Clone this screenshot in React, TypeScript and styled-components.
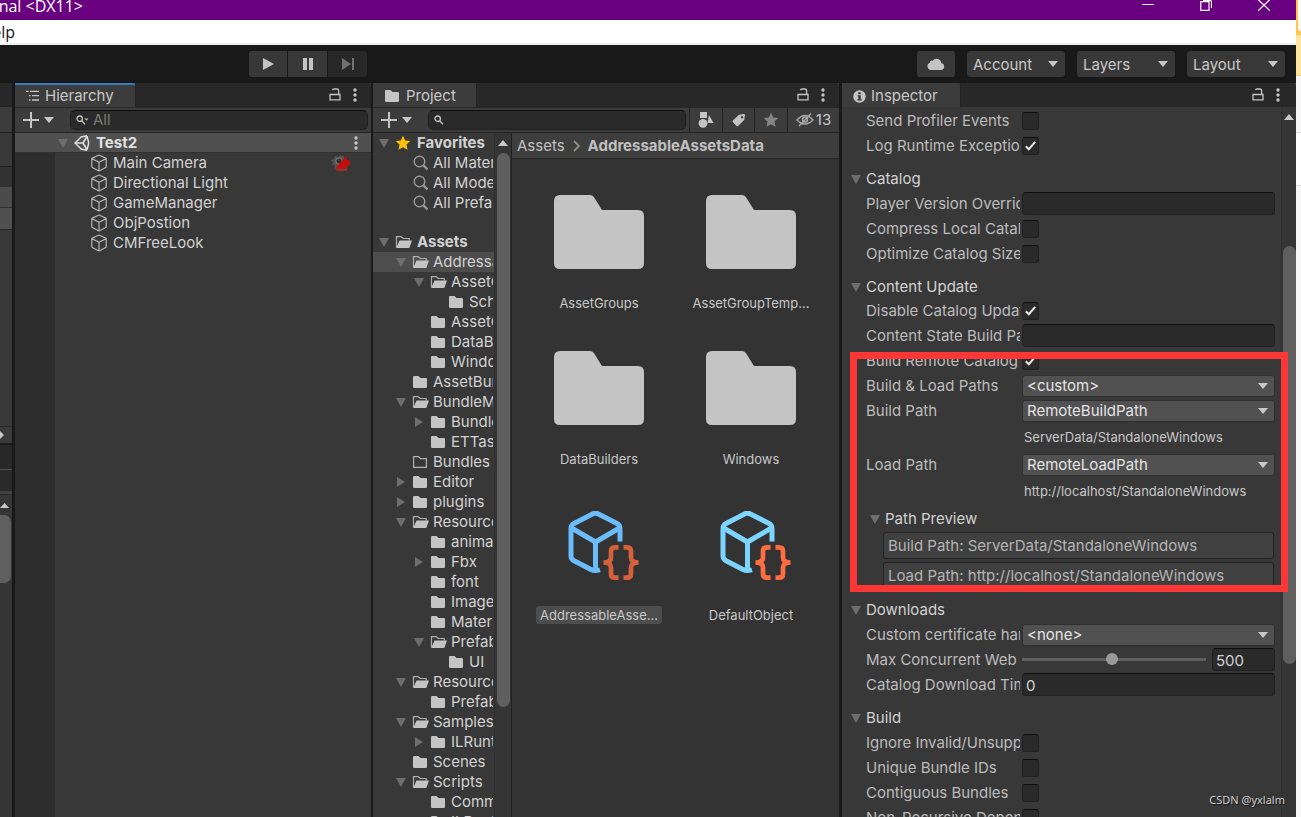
import React, { useId } from "react";
import styled, { createGlobalStyle, css } from "styled-components";

const Global = createGlobalStyle`
  *, *::before, *::after { box-sizing: border-box; }
  html, body, #root { height: 100%; }
  body {
    margin: 0;
    overflow: hidden;
    background: #f6f6f6;
    color: #c8c8c8;
    font: 15px/20px Inter, "Liberation Sans", sans-serif;
  }
  button, input, select { margin: 0; padding: 0; border: 0; color: inherit; font: inherit; background: none; }
  svg { display: block; flex: none; }
`;

/* ---------- icons ---------- */

const Down = ({ size = 10 }: { size?: number }) => (
  <svg width={size} height={size} viewBox="0 0 10 10" fill="currentColor" aria-hidden="true">
    <path d="M0 2h10L5 8z" />
  </svg>
);

const Fold = ({ open = true }: { open?: boolean }) => (
  <svg width="10" height="10" viewBox="0 0 10 10" fill="#6e6e6e" aria-hidden="true">
    <path d={open ? "M0 1h10L5 10z" : "M1 0v10l8-5z"} />
  </svg>
);

const Kebab = () => (
  <svg width="4" height="14" viewBox="0 0 4 14" fill="#c4c4c4" aria-hidden="true">
    <circle cx="2" cy="2" r="1.7" /><circle cx="2" cy="7" r="1.7" /><circle cx="2" cy="12" r="1.7" />
  </svg>
);

const Lock = () => (
  <svg width="12" height="14" viewBox="0 0 12 14" fill="none" stroke="#c4c4c4" strokeWidth="1.3" aria-hidden="true">
    <path d="M1 6.500h10v5.300H1zM9.600 6.500V2.700Q9.600 1 7.900 1H5.200Q3.700 1 3.500 2.200" />
  </svg>
);

const Cube = () => (
  <svg width="18" height="18" viewBox="0 0 18 18" fill="none" stroke="#b4b4b4" strokeWidth="1.2" strokeLinejoin="round" aria-hidden="true">
    <path d="M9 1l7.2 3.4v8.8L9 17l-7.2-3.8V4.4zM1.8 4.6L9 8.2l7.2-3.6M9 8.2V17" />
  </svg>
);

const UnityLogo = () => (
  <svg width="16" height="16" viewBox="0 0 16 16" fill="none" stroke="#e0e0e0" strokeWidth="1.5" aria-hidden="true">
    <path d="M7.2 2L1 8l6.200 6M13 1.200l1.500 5.600v2.400L13 14.800M6.800 2l6.200-1.200M6.800 14l6.200 1.200" />
    <path d="M2 8h7M9 8l4-6.6M9 8l4 6.6" strokeWidth="1.7" />
  </svg>
);

const ListIcon = () => (
  <svg width="14" height="12" viewBox="0 0 14 12" stroke="#c4c4c4" strokeWidth="1.3" aria-hidden="true">
    <path d="M0 1.4h2.6M4 1.4h9M3 5.7h1.6M6 5.7h7M3 10h1.6M6 10h7" />
  </svg>
);

const CameraWarn = () => (
  <svg width="20" height="18" viewBox="0 0 20 18" aria-hidden="true">
    <path d="M0 6l3-1 1-3 3 1 2-1.500 4 1v4l-6 9-4-1 1-3-3-1 1-2z" fill="#555" />
    <circle cx="8" cy="7" r="3.200" fill="#333" stroke="#828282" />
    <path d="M3.500 15.500L15.500 1.500v4l3.500 1.500v4l-3 1.500v3z" fill="#c40d0d" />
    <path d="M4 15h12v2H6z" fill="#8b3a33" />
  </svg>
);

const SmallSearch = ({ menu = false }: { menu?: boolean }) => (
  <svg width="13" height="10" viewBox="0 0 13 10" fill="none" stroke="#c4c4c4" strokeWidth="1.3" aria-hidden="true">
    <circle cx="3.700" cy="3.700" r="2.700" /><path d="M5.700 5.700L9 9.200" />
    {menu && <path d="M8.400 3.500h4L10.400 5.800z" fill="#c4c4c4" stroke="none" />}
  </svg>
);

const BigSearch = () => (
  <svg width="16" height="16" viewBox="0 0 16 16" fill="none" stroke="#9a9a9a" aria-hidden="true">
    <circle cx="7.500" cy="6.500" r="5.300" strokeWidth="1.400" /><path d="M11.500 10.500l4 4" strokeWidth="2.400" />
  </svg>
);

const Star = ({ fill, size = 16 }: { fill: string; size?: number }) => (
  <svg width={size} height={size} viewBox="0 0 16 16" fill={fill} aria-hidden="true">
    <path d="M8 .8l2.200 4.700 5.100.6-3.800 3.500 1 5.100L8 12.200l-4.500 2.500 1-5.100L.7 6.100l5.100-.6z" />
  </svg>
);

type FolderKind = "full" | "open" | "empty";
const Folder = ({ kind = "full" }: { kind?: FolderKind }) => (
  <svg width="17" height="14" viewBox="0 0 17 14" aria-hidden="true">
    {kind === "full" && <path d="M1 2q0-1 1-1h4.500l2 2H14q1 0 1 1v8q0 1-1 1H2q-1 0-1-1z" fill="#c4c4c4" />}
    {kind === "empty" && <path d="M1.600 1.600h5l2 2h5.800v8.800H1.600z" fill="none" stroke="#b0b0b0" strokeWidth="1.200" />}
    {kind === "open" && (
      <>
        <path d="M1.500 12.500V1.600h4.700l2 1.900h6v2" fill="none" stroke="#b0b0b0" strokeWidth="1.200" />
        <path d="M4.500 5.500H17l-2.500 7q-.2.500-.8.500H1.200z" fill="#c4c4c4" />
      </>
    )}
  </svg>
);

const BigFolder = () => (
  <svg width="90" height="74" viewBox="0 0 90 74" fill="#c4c4c4" aria-hidden="true">
    <path d="M0 6Q0 0 6 0H36Q38.500 0 40 2.300L48 15H84Q90 15 90 21V68Q90 74 84 74H6Q0 74 0 68Z" />
  </svg>
);

const AssetIcon = ({ cube, brace }: { cube: string; brace: string }) => (
  <svg width="72" height="70" viewBox="0 0 72 70" fill="none" aria-hidden="true">
    <g stroke={cube} strokeWidth="5">
      <path d="M53 30.500V17.500Q53 14 50 12.500L31.500 3Q28.500 1.600 25.500 3L7 12.500Q4 14 4 17.500V45Q4 48 7 49.700L24 58.500Q27.500 60.300 33 58.800" />
      <path d="M4.500 17L28.500 31L52.500 17M28.500 31V59" />
    </g>
    <path
      d="M51.500 36.300H48Q44 36.300 44 40.300V46.500Q44 51.500 36.500 51.500Q44 51.500 44 56.500V62.700Q44 66.700 48 66.700H51.500M56.500 36.300H60Q64 36.300 64 40.300V46.500Q64 51.500 71.500 51.500Q64 51.500 64 56.500V62.700Q64 66.700 60 66.700H56.500"
      stroke={brace} strokeWidth="4.700"
    />
  </svg>
);

const Cloud = () => (
  <svg width="18" height="14" viewBox="0 0 18 14" fill="#c4c4c4" aria-hidden="true">
    <path d="M4 13a3.800 3.800 0 01-1.200-7.300 2.300 2.300 0 012.900-2A4.800 4.800 0 0114.300 6 3.600 3.600 0 0114.500 13z" />
  </svg>
);

const Info = () => (
  <svg width="13" height="13" viewBox="0 0 13 13" aria-hidden="true">
    <circle cx="6.500" cy="6.500" r="6.200" fill="#c4c4c4" />
    <path d="M5.300 2.300h2.400v2H5.300zM4.600 5.300h3.100v4h1v1.300H4.400V9.300h1V6.600h-.8z" fill="#333" />
  </svg>
);

/* ---------- window chrome ---------- */

const Desktop = styled.div`
  display: flex;
  height: 100vh;
  overflow: hidden;
`;

const Window = styled.div`
  flex: 1;
  min-width: 0;
  display: flex;
  flex-direction: column;
  background: #191919;
`;

const TitleBar = styled.header`
  display: flex;
  justify-content: space-between;
  height: 20px;
  flex: none;
  background: #68007f;
  color: #fff;
  font: 16px/12px "Open Sans", "Noto Sans", sans-serif;
`;

const CutText = styled.span<{ $w: number }>`
  width: ${(p) => p.$w}px;
  display: flex;
  justify-content: flex-end;
  overflow: hidden;
  white-space: nowrap;
`;

const WindowButtons = styled.div`
  display: flex;
  align-items: flex-start;
  gap: 46px;
  padding-right: 26px;
  button { width: 12px; height: 12px; }
`;

const MenuBar = styled.nav`
  display: flex;
  align-items: center;
  height: 25px;
  flex: none;
  background: #fff;
  border-bottom: 2px solid #f0f0f0;
  color: #111;
  font: 16px/20px "Open Sans", "Noto Sans", sans-serif;
`;

const MainToolbar = styled.div`
  display: flex;
  justify-content: space-between;
  align-items: center;
  height: 38px;
  flex: none;
  padding: 0 11px 0 249px;
`;

const PlayGroup = styled.div`
  display: flex;
  gap: 1px;
`;

const PlayButton = styled.button<{ $dim?: boolean }>`
  display: grid;
  place-items: center;
  width: 39px;
  height: 26px;
  background: ${(p) => (p.$dim ? "#282828" : "#383838")};
  color: ${(p) => (p.$dim ? "#707070" : "#c4c4c4")};
  &:first-child { border-radius: 3px 0 0 3px; width: 38px; }
  &:last-child { border-radius: 0 3px 3px 0; }
`;

const ToolGroup = styled.div`
  display: flex;
  gap: 12px;
`;

const CloudButton = styled.button`
  display: grid;
  place-items: center;
  width: 38px;
  height: 26px;
  border-radius: 3px;
  background: #383838;
`;

const SelectWrap = styled.span<{ $top?: boolean }>`
  position: relative;
  display: block;
  flex: ${(p) => (p.$top ? "none" : "1")};
  width: ${(p) => (p.$top ? "98px" : "auto")};
  color: #c8c8c8;
  svg { position: absolute; right: 7px; top: 50%; margin-top: -5px; pointer-events: none; }
`;

const SelectBox = styled.select<{ $top?: boolean }>`
  appearance: none;
  display: block;
  width: 100%;
  height: ${(p) => (p.$top ? 26 : 22)}px;
  padding: 0 20px 2px 4px;
  border-radius: 3px;
  background: #515151;
  border: 1px solid #303030;
  color: #e4e4e4;
  ${(p) => p.$top && css`background: #383838; border-color: #383838; color: #c8c8c8; padding: 1px 20px 0 5px;`}
`;

/* ---------- dock area ---------- */

const Dock = styled.div`
  flex: 1;
  min-height: 0;
  display: flex;
`;

const Panels = styled.main`
  flex: 1;
  min-width: 0;
  display: grid;
  grid-template-columns: minmax(0, 356fr) minmax(0, 467fr) minmax(0, 454fr);
  gap: 2px;
`;

const Panel = styled.section`
  display: flex;
  flex-direction: column;
  min-height: 0;
  overflow: hidden;
  background: #383838;
`;

const ProjectPanel = styled(Panel)`
  margin-right: 1px;
`;

const TabStrip = styled.div`
  display: flex;
  justify-content: space-between;
  height: 24px;
  flex: none;
  background: #282828;
  border-radius: 0 4px 0 0;
`;

const Tab = styled.button<{ $w: number; $active?: boolean }>`
  display: flex;
  align-items: center;
  gap: 5px;
  width: ${(p) => p.$w}px;
  padding-left: 11px;
  background: #3c3c3c;
  border-right: 1px solid #232323;
  border-top: 2px solid ${(p) => (p.$active ? "#3a79bb" : "#3c3c3c")};
  border-radius: 0 3px 0 0;
  color: #c8c8c8;
`;

const TabTools = styled.div<{ $end: number }>`
  display: flex;
  align-items: center;
  gap: 12px;
  padding-right: ${(p) => p.$end}px;
  button { display: block; }
`;

const PanelBar = styled.div`
  display: flex;
  align-items: center;
  height: 26px;
  flex: none;
  background: #3c3c3c;
  border-top: 1px solid #282828;
  border-bottom: 1px solid #232323;
`;

const AddButton = styled.button`
  display: flex;
  align-items: center;
  gap: 5px;
  width: 48px;
  margin-right: 7px;
  padding-left: 8px;
  flex: none;
`;

const SearchBox = styled.label`
  flex: 1;
  min-width: 0;
  display: flex;
  align-items: center;
  gap: 4px;
  height: 20px;
  margin-right: 3px;
  padding-left: 5px;
  border: 1px solid #212121;
  border-top-color: #0d0d0d;
  border-radius: 5px;
  background: #2a2a2a;
  input { flex: 1; min-width: 0; outline: 0; }
  input::placeholder { color: #7a7a7a; opacity: 1; }
`;

/* ---------- hierarchy ---------- */

const SceneRow = styled.div`
  display: flex;
  align-items: center;
  height: 20px;
  flex: none;
  padding: 0 13px 0 43px;
  gap: 6px;
  background: #505050;
  border-bottom: 1px solid #303030;
  color: #e0e0e0;
  font-weight: 700;
  button { margin-left: auto; }
`;

const ObjectList = styled.ul`
  flex: 1;
  margin: 0;
  padding: 0 20px 0 35px;
  border-left: 40px solid #2d2d2d;
  list-style: none;
  li { display: flex; align-items: center; gap: 5px; height: 20px; color: #d2d2d2; }
  li > svg:last-child:not(:first-child) { margin-left: auto; }
`;

/* ---------- project ---------- */

const BarButton = styled.button<{ $w: number }>`
  display: flex;
  align-items: center;
  justify-content: center;
  gap: 2px;
  width: ${(p) => p.$w}px;
  height: 24px;
  flex: none;
  border-left: 1px solid #232323;
`;

const Split = styled.div`
  flex: 1;
  min-height: 0;
  display: flex;
`;

const Tree = styled.ul`
  width: 121px;
  flex: none;
  margin: 0;
  padding: 0;
  overflow: hidden;
  list-style: none;
`;

const TreeRow = styled.li<{ $depth: number; $picked?: boolean; $root?: boolean; $gap?: boolean }>`
  display: flex;
  align-items: center;
  height: 20px;
  margin-top: ${(p) => (p.$gap ? 19 : 0)}px;
  padding-left: ${(p) => (p.$depth ? 5 + p.$depth * 18 : 6)}px;
  background: ${(p) => (p.$picked ? "#4d4d4d" : "none")};
  color: #d2d2d2;
  font-weight: ${(p) => (p.$root ? 700 : 400)};
  white-space: nowrap;
`;

const FoldSlot = styled.span`
  width: 16px;
  flex: none;
`;

const IconSlot = styled.span<{ $root?: boolean }>`
  width: ${(p) => (p.$root ? 22 : 21)}px;
  flex: none;
`;

const NameClip = styled.span`
  min-width: 0;
  overflow: hidden;
  margin-right: 1px;
`;

const ScrollTrack = styled.div<{ $w: number }>`
  display: flex;
  flex-direction: column;
  align-items: center;
  width: ${(p) => p.$w}px;
  flex: none;
  padding-top: 5px;
  background: #353535;
  border-left: 1px solid #303030;
  color: #c8c8c8;
  > svg { transform: rotate(180deg); }
`;

const Part = styled.div<{ $grow: number; $thumb?: boolean }>`
  flex: ${(p) => p.$grow} 1 0;
  width: 13px;
  border-radius: 7px;
  background: ${(p) => (p.$thumb ? "#5f5f5f" : "none")};
`;

const Browser = styled.div`
  flex: 1;
  min-width: 0;
  display: flex;
  flex-direction: column;
  background: #333;
  border-left: 1px solid #202020;
`;

const Crumbs = styled.div`
  display: flex;
  align-items: center;
  gap: 8px;
  height: 26px;
  flex: none;
  padding-left: 5px;
  background: #3e3e3e;
  border-bottom: 1px solid #282828;
  color: #c0c0c0;
  white-space: nowrap;
  strong { font-weight: 700; }
`;

const FileGrid = styled.div`
  display: grid;
  grid-template-columns: repeat(auto-fill, 152px);
  padding: 25px 0 0 11px;
`;

const FileCell = styled.figure`
  display: flex;
  flex-direction: column;
  align-items: center;
  gap: 10px;
  height: 156px;
  margin: 0;
`;

const Thumb = styled.div<{ $asset?: boolean }>`
  display: grid;
  place-items: center;
  width: 96px;
  height: 100px;
  padding-bottom: ${(p) => (p.$asset ? 0 : 4)}px;
  padding-left: ${(p) => (p.$asset ? 8 : 0)}px;
`;

const FileName = styled.figcaption<{ $picked?: boolean }>`
  padding: 0 4px;
  border-radius: 3px;
  font-size: 13px;
  line-height: 18px;
  white-space: nowrap;
  background: ${(p) => (p.$picked ? "#4d4d4d" : "none")};
`;

/* ---------- inspector ---------- */

const Fields = styled.form`
  flex: 1;
  min-width: 0;
  padding-top: 1px;
  overflow: visible;
`;

const Heading = styled.h2<{ $tight?: boolean }>`
  display: flex;
  align-items: center;
  gap: 5px;
  height: ${(p) => (p.$tight ? 32 : 33)}px;
  margin: 0;
  padding: 9px 0 0 9px;
  font-size: 15px;
  font-weight: 400;
  color: #d2d2d2;
`;

const SubHeading = styled(Heading)`
  height: 26px;
  padding: 0 0 0 28px;
`;

const FieldRow = styled.div`
  display: flex;
  align-items: center;
  height: 25px;
  padding: 0 6px 0 24px;
  > label { width: 154px; margin-right: 2px; flex: none; overflow: hidden; white-space: nowrap; color: #bcbcbc; }
`;

const TextInput = styled.input<{ $w?: number }>`
  flex: ${(p) => (p.$w ? "none" : "1")};
  width: ${(p) => (p.$w ? `${p.$w}px` : "auto")};
  min-width: 0;
  height: 23px;
  padding: 2px 3px 0;
  background: #2a2a2a;
  border: 1px solid #212121;
  border-top-color: #0d0d0d;
  border-radius: 4px;
  color: #d2d2d2;
`;

const CheckWrap = styled.span`
  position: relative;
  display: block;
  input {
    appearance: none;
    display: block;
    width: 17px;
    height: 18px;
    background: #2a2a2a;
    border: 1px solid #212121;
    border-top-color: #0d0d0d;
    border-radius: 3px;
  }
  svg { position: absolute; left: 3px; top: 4px; pointer-events: none; display: none; }
  input:checked + svg { display: block; }
`;

const Slider = styled.input`
  appearance: none;
  flex: 1;
  min-width: 0;
  height: 14px;
  margin-right: 6px;
  &::-webkit-slider-runnable-track { height: 3px; background: #5e5e5e; }
  &::-webkit-slider-thumb {
    appearance: none;
    width: 12px;
    height: 12px;
    margin-top: -5px;
    border-radius: 50%;
    background: #999;
  }
`;

const Hint = styled.p`
  height: 29px;
  margin: 0 0 0 182px;
  font-size: 13px;
  line-height: 29px;
  white-space: nowrap;
`;

const Preview = styled.div`
  height: 27px;
  margin: 0 7px 0 41px;
  padding-left: 4px;
  border: 1px solid #232323;
  border-radius: 3px;
  background: #404040;
  color: #b4b4b4;
  line-height: 26px;
  white-space: nowrap;
  & + & { margin-top: 3px; }
`;

const Marked = styled.div`
  position: relative;
`;

const Marker = styled.div`
  position: absolute;
  inset: 4px -7px -3px 8px;
  border: 7px solid #fd3735;
  pointer-events: none;
`;

/* ---------- edges ---------- */

const EdgePanel = styled.aside`
  display: flex;
  flex-direction: column;
  width: 12px;
  margin-right: 3px;
  flex: none;
  background: #363636;
  overflow: hidden;
`;

const Band = styled.div<{ $h: number; $bg: string; $line?: string }>`
  height: ${(p) => p.$h}px;
  flex: none;
  background: ${(p) => p.$bg};
  border-bottom: ${(p) => (p.$line ? `1px solid ${p.$line}` : "0")};
  color: #c8c8c8;
`;

const EdgeThumb = styled.div`
  width: 11px;
  height: 68px;
  flex: none;
  border-radius: 0 7px 7px 0;
  background: #5f5f5f;
`;

const Backdrop = styled.div`
  width: 5px;
  flex: none;
  background: #f6f6f6;
`;

const CardCorner = styled.div`
  height: 35px;
  background: #ffc94f;
  &::before {
    content: "";
    display: block;
    height: 31px;
    margin-left: 2px;
    border-radius: 0 0 0 4px;
    background: #fffdf8;
  }
`;

const Watermark = styled.div`
  position: absolute;
  right: 16px;
  bottom: 9px;
  color: #d0d0d0;
  font: 11px/16px "Noto Sans", sans-serif;
  text-shadow: 1px 1px 1px #111;
`;

/* ---------- composed parts ---------- */

const PanelTools = ({ end = 14 }: { end?: number }) => (
  <TabTools $end={end}>
    <button aria-label="Lock"><Lock /></button>
    <button aria-label="Panel menu"><Kebab /></button>
  </TabTools>
);

const Add = () => (
  <AddButton aria-label="Create">
    <svg width="16" height="16" viewBox="0 0 16 16" stroke="#c4c4c4" strokeWidth="2" aria-hidden="true"><path d="M8 0v16M0 8h16" /></svg>
    <Down />
  </AddButton>
);

const Dropdown = ({ value, top, id }: { value: string; top?: boolean; id?: string }) => (
  <SelectWrap $top={top}>
    <SelectBox $top={top} id={id} aria-label={id ? undefined : value} defaultValue={value}>
      <option>{value}</option>
    </SelectBox>
    <Down />
  </SelectWrap>
);

const Check = ({ label, on }: { label: string; on?: boolean }) => {
  const id = useId();
  return (
    <FieldRow>
      <label htmlFor={id}>{label}</label>
      <CheckWrap>
        <input id={id} type="checkbox" defaultChecked={on} />
        <svg width="11" height="10" viewBox="0 0 11 10" fill="none" stroke="#e8e8e8" strokeWidth="2" aria-hidden="true"><path d="M.8 5.200l3 3L10.200.8" /></svg>
      </CheckWrap>
    </FieldRow>
  );
};

const Text = ({ label, value = "" }: { label: string; value?: string }) => {
  const id = useId();
  return (
    <FieldRow>
      <label htmlFor={id}>{label}</label>
      <TextInput id={id} defaultValue={value} />
    </FieldRow>
  );
};

const Choice = ({ label, value }: { label: string; value: string }) => {
  const id = useId();
  return (
    <FieldRow>
      <label htmlFor={id}>{label}</label>
      <Dropdown id={id} value={value} />
    </FieldRow>
  );
};

const RangeField = ({ label, value }: { label: string; value: number }) => {
  const id = useId();
  return (
    <FieldRow>
      <label htmlFor={id}>{label}</label>
      <Slider id={id} type="range" min={0} max={1024} defaultValue={value} />
      <TextInput $w={63} aria-label={`${label} value`} defaultValue={value} />
    </FieldRow>
  );
};

type Node = { name: string; depth: number; open?: boolean; kind?: FolderKind; picked?: boolean };
const tree: Node[] = [
  { name: "AddressableAssetsData", depth: 1, open: true, picked: true },
  { name: "AssetGroups", depth: 2, open: true },
  { name: "Schemas", depth: 3 },
  { name: "AssetGroupTemplates", depth: 2 },
  { name: "DataBuilders", depth: 2 },
  { name: "Windows", depth: 2 },
  { name: "AssetBundles", depth: 1 },
  { name: "BundleMaster", depth: 1, open: true },
  { name: "BundleMaster", depth: 2, open: false },
  { name: "ETTask", depth: 2 },
  { name: "Bundles", depth: 1, kind: "empty" },
  { name: "Editor", depth: 1, open: false },
  { name: "plugins", depth: 1, open: false },
  { name: "Resources", depth: 1, open: true },
  { name: "animation", depth: 2 },
  { name: "Fbx", depth: 2, open: false },
  { name: "font", depth: 2 },
  { name: "Images", depth: 2 },
  { name: "Materials", depth: 2 },
  { name: "Prefabs", depth: 2, open: true },
  { name: "UI", depth: 3 },
  { name: "Resources", depth: 1, open: true },
  { name: "Prefabs", depth: 2 },
  { name: "Samples", depth: 1, open: true },
  { name: "ILRuntime", depth: 2, open: false },
  { name: "Scenes", depth: 1 },
  { name: "Scripts", depth: 1, open: true },
  { name: "Common", depth: 2 },
  { name: "ILRuntime", depth: 2 },
];

const Hierarchy = () => (
  <Panel>
    <TabStrip>
      <Tab $w={121} $active><ListIcon />Hierarchy</Tab>
      <PanelTools />
    </TabStrip>
    <PanelBar>
      <Add />
      <SearchBox><SmallSearch menu /><input placeholder="All" aria-label="Search hierarchy" /></SearchBox>
    </PanelBar>
    <SceneRow>
      <Fold /><UnityLogo />Test2
      <button aria-label="Scene menu"><Kebab /></button>
    </SceneRow>
    <ObjectList>
      {["Main Camera", "Directional Light", "GameManager", "ObjPostion", "CMFreeLook"].map((n, i) => (
        <li key={n}><Cube />{n}{i === 0 && <CameraWarn />}</li>
      ))}
    </ObjectList>
  </Panel>
);

const Project = () => (
  <ProjectPanel>
    <TabStrip>
      <Tab $w={104}><Folder />Project</Tab>
      <PanelTools />
    </TabStrip>
    <PanelBar>
      <Add />
      <SearchBox><SmallSearch /><input aria-label="Search project" /></SearchBox>
      <BarButton $w={33} aria-label="Filter by type">
        <svg width="16" height="16" viewBox="0 0 16 16" fill="#c4c4c4" aria-hidden="true"><path d="M2 0h7v6H2zM11 3l4.500 8H9.500z" /><circle cx="5" cy="11.300" r="4.400" /></svg>
      </BarButton>
      <BarButton $w={32} aria-label="Filter by label">
        <svg width="14" height="14" viewBox="0 0 14 14" fill="#c4c4c4" aria-hidden="true"><path fillRule="evenodd" d="M.8 7.500L7 1.700 12 1q1 0 1 1l-.8 5L6 13q-.8.600-1.500 0L.8 9q-.6-.8 0-1.500zM10 3a1.200 1.200 0 100 2.400A1.200 1.200 0 0010 3z" /></svg>
      </BarButton>
      <BarButton $w={33} aria-label="Favorite"><Star fill="#858585" /></BarButton>
      <BarButton $w={52} aria-label="Hidden packages, 13">
        <svg width="18" height="16" viewBox="0 0 18 16" fill="none" stroke="#a8a8a8" strokeWidth="1.500" aria-hidden="true"><path d="M1 8q8-9 16 0-8 8-16 0zM3 14L15 1.500" /><circle cx="9" cy="7.600" r="2.500" /></svg>
        13
      </BarButton>
    </PanelBar>
    <Split>
      <Tree>
        <TreeRow $depth={0} $root>
          <FoldSlot><Fold /></FoldSlot><IconSlot $root><Star fill="#fdc008" /></IconSlot><NameClip>Favorites</NameClip>
        </TreeRow>
        {["All Materials", "All Models", "All Prefabs"].map((n) => (
          <TreeRow key={n} $depth={1}><FoldSlot /><IconSlot><BigSearch /></IconSlot><NameClip>{n}</NameClip></TreeRow>
        ))}
        <TreeRow $depth={0} $root $gap>
          <FoldSlot><Fold /></FoldSlot><IconSlot $root><Folder kind="open" /></IconSlot><NameClip>Assets</NameClip>
        </TreeRow>
        {tree.map((n, i) => (
          <TreeRow key={i} $depth={n.depth} $picked={n.picked}>
            <FoldSlot>{n.open !== undefined && <Fold open={n.open} />}</FoldSlot>
            <IconSlot><Folder kind={n.kind ?? (n.open ? "open" : "full")} /></IconSlot>
            <NameClip>{n.name}</NameClip>
          </TreeRow>
        ))}
      </Tree>
      <ScrollTrack $w={17}>
        <Down /><Part $grow={5} /><Part $grow={554} $thumb /><Part $grow={110} />
      </ScrollTrack>
      <Browser>
        <Crumbs>
          Assets
          <svg width="7" height="12" viewBox="0 0 7 12" fill="none" stroke="#8c8c8c" strokeWidth="1.800" aria-hidden="true"><path d="M1 1l5 5-5 5" /></svg>
          <strong>AddressableAssetsData</strong>
        </Crumbs>
        <FileGrid>
          {["AssetGroups", "AssetGroupTemp...", "DataBuilders", "Windows"].map((n) => (
            <FileCell key={n}><Thumb><BigFolder /></Thumb><FileName>{n}</FileName></FileCell>
          ))}
          <FileCell><Thumb $asset><AssetIcon cube="#6abcfb" brace="#d6603c" /></Thumb><FileName $picked>AddressableAsse...</FileName></FileCell>
          <FileCell><Thumb $asset><AssetIcon cube="#7cd5ff" brace="#ff6d40" /></Thumb><FileName>DefaultObject</FileName></FileCell>
        </FileGrid>
      </Browser>
    </Split>
  </ProjectPanel>
);

const Inspector = () => (
  <Panel>
    <TabStrip>
      <Tab $w={119}><Info />Inspector</Tab>
      <PanelTools end={16} />
    </TabStrip>
    <Split>
      <Fields>
        <Check label="Send Profiler Events" />
        <Check label="Log Runtime Exceptions" on />
        <Heading><Fold />Catalog</Heading>
        <Text label="Player Version Override" />
        <Check label="Compress Local Catalog" />
        <Check label="Optimize Catalog Size" />
        <Heading $tight><Fold />Content Update</Heading>
        <Check label="Disable Catalog Update on Startup" on />
        <Text label="Content State Build Path" />
        <Marked>
          <Check label="Build Remote Catalog" on />
          <Choice label="Build &amp; Load Paths" value="<custom>" />
          <Choice label="Build Path" value="RemoteBuildPath" />
          <Hint>ServerData/StandaloneWindows</Hint>
          <Choice label="Load Path" value="RemoteLoadPath" />
          <Hint>http://localhost/StandaloneWindows</Hint>
          <SubHeading><Fold />Path Preview</SubHeading>
          <Preview>Build Path: ServerData/StandaloneWindows</Preview>
          <Preview>Load Path: http://localhost/StandaloneWindows</Preview>
          <Marker />
        </Marked>
        <Heading><Fold />Downloads</Heading>
        <Choice label="Custom certificate handler" value="<none>" />
        <RangeField label="Max Concurrent Web Requests" value={500} />
        <Text label="Catalog Download Timeout" value="0" />
        <Heading><Fold />Build</Heading>
        <Check label="Ignore Invalid/Unsupported Files" />
        <Check label="Unique Bundle IDs" />
        <Check label="Contiguous Bundles" />
        <Check label="Non-Recursive Dependency" />
      </Fields>
      <ScrollTrack $w={15}>
        <Down /><Part $grow={124} /><Part $grow={417} $thumb /><Part $grow={153} />
      </ScrollTrack>
    </Split>
  </Panel>
);

export default function App() {
  return (
    <Desktop>
      <Global />
      <Window>
        <TitleBar>
          <CutText $w={83}>nal &lt;DX11&gt;</CutText>
          <WindowButtons>
            <button aria-label="Minimize"><svg width="12" height="12" viewBox="0 0 12 12" stroke="#fff"><path d="M0 4.500h12" /></svg></button>
            <button aria-label="Restore"><svg width="12" height="12" viewBox="0 0 12 12" fill="none" stroke="#fff" strokeWidth="1.200"><path d="M.8 1.600h8.200v8.800H.8zM3 .3h6.500q2 0 2 2V8" /></svg></button>
            <button aria-label="Close"><svg width="12" height="12" viewBox="0 0 12 12" stroke="#fff" strokeWidth="1.200"><path d="M0-.6l12 11.500M12-.6L0 10.900" /></svg></button>
          </WindowButtons>
        </TitleBar>
        <MenuBar><CutText $w={15}>elp</CutText></MenuBar>
        <MainToolbar>
          <PlayGroup>
            <PlayButton aria-label="Play"><svg width="12" height="12" viewBox="0 0 12 12" fill="currentColor"><path d="M1 0v12l11-6z" /></svg></PlayButton>
            <PlayButton aria-label="Pause"><svg width="12" height="12" viewBox="0 0 12 12" fill="currentColor"><path d="M1 0h4v12H1zM7 0h4v12H7z" /></svg></PlayButton>
            <PlayButton $dim aria-label="Step"><svg width="14" height="12" viewBox="0 0 14 12" fill="currentColor"><path d="M1 0v12l9-6zM11 0h2v12h-2z" /></svg></PlayButton>
          </PlayGroup>
          <ToolGroup>
            <CloudButton aria-label="Cloud services"><Cloud /></CloudButton>
            <Dropdown top value="Account" />
            <Dropdown top value="Layers" />
            <Dropdown top value="Layout" />
          </ToolGroup>
        </MainToolbar>
        <Dock>
          <EdgePanel>
            <Band $h={24} $bg="#282828" $line="#232323" />
            <Band $h={26} $bg="#3c3c3c" $line="#232323" />
            <Band $h={34} $bg="#383838" $line="#202020" />
            <Band $h={20} $bg="#323232" />
            <Band $h={21} $bg="#4b4b4b" $line="#333333" />
            <Band $h={22} $bg="#505050" $line="#2a2a2a" />
            <Band $h={197} $bg="#383838" $line="#2c2c2c" />
            <Band $h={17} $bg="#3a3a3a" $line="#1e1e1e">
              <svg width="4" height="16" viewBox="0 0 4 16" fill="currentColor" aria-hidden="true"><path d="M0 4l4 4-4 4z" /></svg>
            </Band>
            <Band $h={1} $bg="#191919" />
            <Band $h={25} $bg="#282828" $line="#505050" />
            <Band $h={21} $bg="#2a2a2a" />
            <Band $h={4} $bg="#404040" $line="#2a2a2a" />
            <Band $h={20} $bg="#363636">
              <svg width="10" height="20" viewBox="0 0 10 20" fill="currentColor" aria-hidden="true"><path d="M0 13l4.500-5L9 13z" /></svg>
            </Band>
            <EdgeThumb />
          </EdgePanel>
          <Panels>
            <Hierarchy />
            <Project />
            <Inspector />
          </Panels>
        </Dock>
      </Window>
      <Backdrop>
        <CardCorner />
        <Band $h={41} $bg="#ffe5a0" $line="#ffcf6a" />
        <Band $h={57} $bg="#f6f6f6" $line="#dcdcdc" />
        <Band $h={53} $bg="#ffffff" $line="#dcdcdc" />
      </Backdrop>
      <Watermark>CSDN @yxlalm</Watermark>
    </Desktop>
  );
}
